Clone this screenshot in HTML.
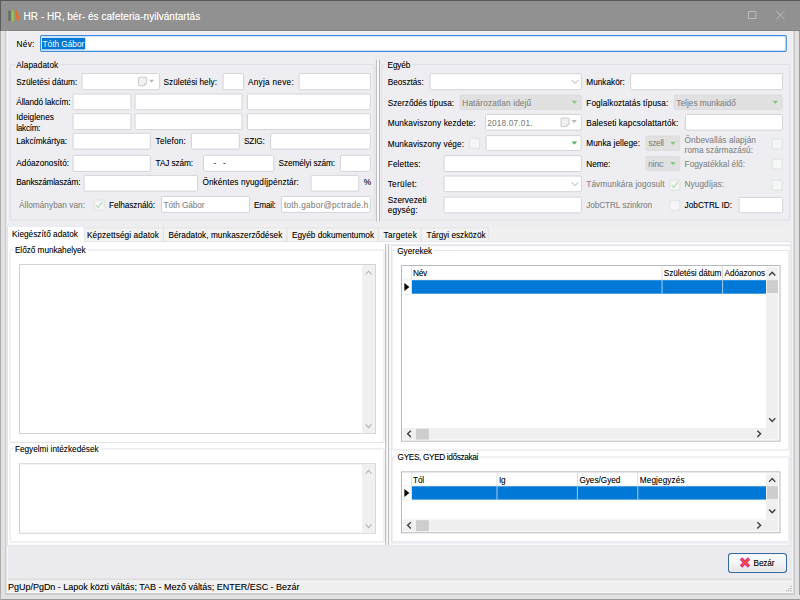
<!DOCTYPE html>
<html lang="hu"><head><meta charset="utf-8"><title>HR - HR, bér- és cafeteria-nyilvántartás</title>
<style>
html,body{margin:0;padding:0;}
body{width:800px;height:600px;overflow:hidden;position:relative;background:#eeeef2;font-family:"Liberation Sans",sans-serif;font-size:8.25px;color:#000;}
#ui{position:absolute;left:0;top:0;}
#labels span{text-shadow:0 0 0.5px rgba(0,0,0,.28);position:absolute;white-space:pre;line-height:12px;height:12px;}

</style></head><body>
<svg id="ui" width="800" height="600" viewBox="0 0 800 600">
<rect x="0.00" y="0.00" width="800.00" height="31.00" rx="0" fill="#919191" />
<rect x="0.00" y="0.00" width="800.00" height="1.00" rx="0" fill="#585858" />
<rect x="0.00" y="30.00" width="800.00" height="1.00" rx="0" fill="#858585" />
<rect x="0.00" y="0.00" width="0.90" height="31.00" rx="0" fill="#555" />
<rect x="0.00" y="31.00" width="5.00" height="569.00" rx="0" fill="#e2e2e2" />
<rect x="0.00" y="31.00" width="0.90" height="569.00" rx="0" fill="#adadad" />
<rect x="5.00" y="31.00" width="1.60" height="564.00" rx="0" fill="#cbcbcb" />
<rect x="6.60" y="31.00" width="1.40" height="562.00" rx="0" fill="#f7f7f9" />
<rect x="792.00" y="31.00" width="1.20" height="562.00" rx="0" fill="#f6f6f8" />
<rect x="793.20" y="31.00" width="1.80" height="564.00" rx="0" fill="#cbcbcb" />
<rect x="795.00" y="31.00" width="5.00" height="569.00" rx="0" fill="#e2e2e2" />
<rect x="799.00" y="31.00" width="1.00" height="569.00" rx="0" fill="#9a9a9a" />
<rect x="6.60" y="592.00" width="786.60" height="1.20" rx="0" fill="#f6f6f8" />
<rect x="5.00" y="593.20" width="790.00" height="1.80" rx="0" fill="#cbcbcb" />
<rect x="0.00" y="595.00" width="800.00" height="5.00" rx="0" fill="#e2e2e2" />
<rect x="0.00" y="599.00" width="800.00" height="1.00" rx="0" fill="#9a9a9a" />
<rect x="0.00" y="31.00" width="0.90" height="569.00" rx="0" fill="#adadad" />
<g transform="translate(7 9)"><rect x="1.2" y="1.5" width="2.6" height="10.5" rx="0.8" fill="#6b6b6b"/><rect x="4.4" y="1.2" width="2.8" height="11" rx="0.9" fill="#8cc63f"/><path d="M7.6 2.2 L10 1.4 L12.6 11 L10.2 11.8 Z" fill="#f26a21"/></g>
<rect x="748.67" y="11.38" width="7.25" height="7.25" rx="0" fill="none" stroke="#c9c9c9" stroke-width="0.75" />
<path transform="translate(0.00 0.00)" d="M776.3 11 L784.5 19.2 M784.5 11 L776.3 19.2" fill="none" stroke="#c9c9c9" stroke-width="0.75" />
<rect x="40.60" y="35.70" width="745.60" height="15.60" rx="1.1" fill="#fff" stroke="#3a8bdc" stroke-width="1.2" />
<rect x="42.00" y="37.80" width="43.20" height="11.60" rx="0" fill="#0078d7" />
<rect x="10.40" y="64.60" width="363.80" height="155.60" rx="1" fill="none" stroke="#dbdbe0" stroke-width="0.8" />
<rect x="14.90" y="62.00" width="45.00" height="6.00" rx="0" fill="#eeeef2" />
<rect x="82.05" y="73.55" width="77.50" height="16.20" rx="1.2" fill="#fff" stroke="#cfcfd4" stroke-width="0.9" />
<path transform="translate(138.60 77.20)" d="M0.8 0 h6.4 a0.8 0.8 0 0 1 .8 .8 v5.6 l-2.2 2.2 h-5 a0.8 0.8 0 0 1 -.8 -.8 v-7 a0.8 0.8 0 0 1 .8 -.8z" fill="#eff1f4" stroke="#c3bfbc" stroke-width="0.8" />
<path transform="translate(138.60 77.20)" d="M8 6.4 l-2.2 0 l0 2.2" fill="none" stroke="#c8c8c8" stroke-width="0.6" />
<path transform="translate(151.50 81.30)" d="M-2.6 -1.5 h5.2 l-2.6 3z" fill="#b9b6b3"  />
<rect x="223.05" y="73.55" width="20.50" height="16.20" rx="1.2" fill="#fff" stroke="#cfcfd4" stroke-width="0.9" />
<rect x="299.05" y="73.55" width="71.30" height="16.20" rx="1.2" fill="#fff" stroke="#cfcfd4" stroke-width="0.9" />
<rect x="73.05" y="94.05" width="57.90" height="15.70" rx="1.2" fill="#fff" stroke="#cfcfd4" stroke-width="0.9" />
<rect x="135.05" y="94.05" width="106.90" height="15.70" rx="1.2" fill="#fff" stroke="#cfcfd4" stroke-width="0.9" />
<rect x="247.45" y="94.05" width="122.90" height="15.70" rx="1.2" fill="#fff" stroke="#cfcfd4" stroke-width="0.9" />
<rect x="73.05" y="113.65" width="57.90" height="15.90" rx="1.2" fill="#fff" stroke="#cfcfd4" stroke-width="0.9" />
<rect x="135.05" y="113.65" width="106.90" height="15.90" rx="1.2" fill="#fff" stroke="#cfcfd4" stroke-width="0.9" />
<rect x="247.45" y="113.65" width="122.90" height="15.90" rx="1.2" fill="#fff" stroke="#cfcfd4" stroke-width="0.9" />
<rect x="73.05" y="133.25" width="77.30" height="15.80" rx="1.2" fill="#fff" stroke="#cfcfd4" stroke-width="0.9" />
<rect x="191.45" y="133.25" width="47.90" height="15.80" rx="1.2" fill="#fff" stroke="#cfcfd4" stroke-width="0.9" />
<rect x="270.65" y="133.25" width="99.70" height="15.80" rx="1.2" fill="#fff" stroke="#cfcfd4" stroke-width="0.9" />
<rect x="73.05" y="155.35" width="77.30" height="16.00" rx="1.2" fill="#fff" stroke="#cfcfd4" stroke-width="0.9" />
<rect x="203.45" y="155.35" width="70.30" height="16.00" rx="1.2" fill="#fff" stroke="#cfcfd4" stroke-width="0.9" />
<rect x="340.45" y="155.35" width="29.90" height="16.00" rx="1.2" fill="#fff" stroke="#cfcfd4" stroke-width="0.9" />
<rect x="84.05" y="175.35" width="113.50" height="15.80" rx="1.2" fill="#fff" stroke="#cfcfd4" stroke-width="0.9" />
<rect x="311.05" y="175.35" width="47.70" height="15.80" rx="1.2" fill="#fff" stroke="#cfcfd4" stroke-width="0.9" />
<rect x="94.15" y="200.15" width="9.90" height="9.90" rx="0.5" fill="#f6f6f8" stroke="#d6e3d6" stroke-width="0.9" />
<path transform="translate(94.00 200.00)" d="M2 5 L4 7.5 L8.3 1.9" fill="none" stroke="#a3d9a5" stroke-width="1.05" />
<rect x="161.45" y="196.45" width="88.10" height="15.90" rx="1.2" fill="#fff" stroke="#cfcfd4" stroke-width="0.9" />
<rect x="281.45" y="196.45" width="88.90" height="15.90" rx="1.2" fill="#fff" stroke="#cfcfd4" stroke-width="0.9" />
<rect x="375.30" y="59.00" width="5.20" height="162.90" rx="0" fill="#fafafc" />
<rect x="375.80" y="59.40" width="1.00" height="162.40" rx="0" fill="#b2b2b4" />
<rect x="379.00" y="59.40" width="1.00" height="162.40" rx="0" fill="#b2b2b4" />
<rect x="381.40" y="64.60" width="408.20" height="155.60" rx="1" fill="none" stroke="#dbdbe0" stroke-width="0.8" />
<rect x="386.20" y="62.00" width="25.60" height="6.00" rx="0" fill="#eeeef2" />
<rect x="430.05" y="73.65" width="151.30" height="16.00" rx="1.2" fill="#fff" stroke="#cfcfd4" stroke-width="0.9" />
<path transform="translate(575.00 81.80)" d="M-3.3 -1.7 L0 1.7 L3.3 -1.7" fill="none" stroke="#9c9c9c" stroke-width="0.8" />
<rect x="630.65" y="73.65" width="151.80" height="16.00" rx="1.2" fill="#fff" stroke="#cfcfd4" stroke-width="0.9" />
<rect x="460.10" y="95.10" width="121.00" height="14.50" rx="0.9" fill="#e1e1e1" stroke="#d9d9d9" stroke-width="0.8" />
<path transform="translate(574.40 102.40)" d="M-2.7 -1.6 h5.4 l-2.7 3.2z" fill="#86c786"  />
<rect x="674.10" y="95.10" width="108.00" height="14.50" rx="0.9" fill="#e1e1e1" stroke="#d9d9d9" stroke-width="0.8" />
<path transform="translate(775.40 102.40)" d="M-2.7 -1.6 h5.4 l-2.7 3.2z" fill="#86c786"  />
<rect x="485.45" y="114.45" width="95.90" height="15.70" rx="1.2" fill="#fff" stroke="#cfcfd4" stroke-width="0.9" />
<path transform="translate(561.00 118.00)" d="M0.8 0 h6.4 a0.8 0.8 0 0 1 .8 .8 v5.6 l-2.2 2.2 h-5 a0.8 0.8 0 0 1 -.8 -.8 v-7 a0.8 0.8 0 0 1 .8 -.8z" fill="#eff1f4" stroke="#c3bfbc" stroke-width="0.8" />
<path transform="translate(561.00 118.00)" d="M8 6.4 l-2.2 0 l0 2.2" fill="none" stroke="#c8c8c8" stroke-width="0.6" />
<path transform="translate(574.20 121.60)" d="M-2.7 -1.5 h5.4 l-2.7 3z" fill="#b9b6b3"  />
<rect x="685.45" y="114.45" width="97.00" height="15.70" rx="1.2" fill="#fff" stroke="#cfcfd4" stroke-width="0.9" />
<rect x="469.75" y="138.15" width="9.90" height="10.10" rx="0.5" fill="#f6f6f8" stroke="#d6e3d6" stroke-width="0.9" />
<rect x="486.05" y="135.65" width="95.10" height="14.80" rx="1.2" fill="#fff" stroke="#cfcfd4" stroke-width="0.9" />
<path transform="translate(574.40 143.20)" d="M-2.7 -1.6 h5.4 l-2.7 3.2z" fill="#55b055"  />
<rect x="646.10" y="136.10" width="33.60" height="14.30" rx="0.9" fill="#e1e1e1" stroke="#d9d9d9" stroke-width="0.8" />
<path transform="translate(673.00 143.40)" d="M-2.7 -1.6 h5.4 l-2.7 3.2z" fill="#86c786"  />
<rect x="772.15" y="139.15" width="9.90" height="9.90" rx="0.5" fill="#f6f6f8" stroke="#d6e3d6" stroke-width="0.9" />
<rect x="444.05" y="155.65" width="137.30" height="15.90" rx="1.2" fill="#fff" stroke="#cfcfd4" stroke-width="0.9" />
<rect x="646.10" y="156.50" width="33.60" height="14.00" rx="0.9" fill="#e1e1e1" stroke="#d9d9d9" stroke-width="0.8" />
<path transform="translate(673.00 163.60)" d="M-2.7 -1.6 h5.4 l-2.7 3.2z" fill="#86c786"  />
<rect x="772.15" y="159.15" width="9.90" height="9.90" rx="0.5" fill="#f6f6f8" stroke="#d6e3d6" stroke-width="0.9" />
<rect x="444.05" y="176.05" width="137.30" height="15.60" rx="1.2" fill="#fff" stroke="#cfcfd4" stroke-width="0.9" />
<path transform="translate(575.00 184.00)" d="M-3.3 -1.7 L0 1.7 L3.3 -1.7" fill="none" stroke="#9c9c9c" stroke-width="0.8" />
<rect x="669.95" y="180.15" width="9.90" height="9.90" rx="0.5" fill="#f6f6f8" stroke="#d6e3d6" stroke-width="0.9" />
<path transform="translate(669.80 180.00)" d="M2 5 L4 7.5 L8.3 1.9" fill="none" stroke="#a3d9a5" stroke-width="1.05" />
<rect x="772.15" y="180.15" width="9.90" height="9.90" rx="0.5" fill="#f6f6f8" stroke="#d6e3d6" stroke-width="0.9" />
<rect x="444.05" y="197.05" width="137.30" height="15.90" rx="1.2" fill="#fff" stroke="#cfcfd4" stroke-width="0.9" />
<rect x="669.95" y="200.35" width="9.90" height="9.90" rx="0.5" fill="#f6f6f8" stroke="#d6e3d6" stroke-width="0.9" />
<rect x="739.05" y="197.45" width="43.60" height="15.30" rx="1.2" fill="#fff" stroke="#cfcfd4" stroke-width="0.9" />
<rect x="7.00" y="225.40" width="784.00" height="16.20" rx="0" fill="#f0f0f0" />
<rect x="83.60" y="227.80" width="80.00" height="14.80" rx="0" fill="#f2f2f2" stroke="#dfdfdf" stroke-width="0.8" />
<rect x="163.60" y="227.80" width="123.40" height="14.80" rx="0" fill="#f2f2f2" stroke="#dfdfdf" stroke-width="0.8" />
<rect x="287.00" y="227.80" width="91.20" height="14.80" rx="0" fill="#f2f2f2" stroke="#dfdfdf" stroke-width="0.8" />
<rect x="378.20" y="227.80" width="43.00" height="14.80" rx="0" fill="#f2f2f2" stroke="#dfdfdf" stroke-width="0.8" />
<rect x="421.20" y="227.80" width="67.00" height="14.80" rx="0" fill="#f2f2f2" stroke="#dfdfdf" stroke-width="0.8" />
<rect x="7.45" y="241.65" width="783.70" height="303.60" rx="0" fill="#fff" stroke="#e1e1e4" stroke-width="0.9" />
<rect x="391.30" y="245.10" width="398.80" height="298.00" rx="0" fill="none" stroke="#e4e4ef" stroke-width="1" />
<rect x="390.80" y="244.60" width="399.80" height="1.60" rx="0" fill="#e5e5f0" />
<rect x="7.40" y="226.20" width="76.80" height="16.40" rx="0" fill="#fff" stroke="#e1e1e4" stroke-width="0.8" />
<rect x="7.90" y="241.00" width="75.90" height="2.20" rx="0" fill="#fff" />
<rect x="10.00" y="250.00" width="374.00" height="192.40" rx="1" fill="none" stroke="#dbdbe0" stroke-width="0.8" />
<rect x="13.50" y="247.00" width="73.80" height="6.00" rx="0" fill="#fff" />
<rect x="19.40" y="264.60" width="356.20" height="169.00" rx="0" fill="#fff" stroke="#c9c9cd" stroke-width="0.8" />
<rect x="362.00" y="265.00" width="13.20" height="168.20" rx="0" fill="#f0f0f0" />
<path transform="translate(368.60 272.80)" d="M-2.9 1.6 L0 -1.6 L2.9 1.6" fill="none" stroke="#b4b4b4" stroke-width="1.1" />
<path transform="translate(368.60 426.00)" d="M-2.9 -1.6 L0 1.6 L2.9 -1.6" fill="none" stroke="#b4b4b4" stroke-width="1.1" />
<rect x="10.00" y="448.80" width="374.00" height="93.20" rx="1" fill="none" stroke="#dbdbe0" stroke-width="0.8" />
<rect x="13.50" y="445.90" width="86.80" height="6.00" rx="0" fill="#fff" />
<rect x="19.40" y="463.80" width="356.20" height="69.40" rx="0" fill="#fff" stroke="#c9c9cd" stroke-width="0.8" />
<rect x="362.00" y="464.20" width="13.20" height="68.60" rx="0" fill="#f0f0f0" />
<path transform="translate(368.60 472.00)" d="M-2.9 1.6 L0 -1.6 L2.9 1.6" fill="none" stroke="#b4b4b4" stroke-width="1.1" />
<path transform="translate(368.60 526.00)" d="M-2.9 -1.6 L0 1.6 L2.9 -1.6" fill="none" stroke="#b4b4b4" stroke-width="1.1" />
<rect x="385.20" y="244.00" width="4.00" height="300.80" rx="0" fill="#f6f6f8" />
<rect x="385.20" y="244.00" width="0.90" height="300.80" rx="0" fill="#b2b2b4" />
<rect x="388.20" y="244.00" width="0.90" height="300.80" rx="0" fill="#b2b2b4" />
<rect x="392.00" y="250.40" width="397.00" height="199.60" rx="1" fill="none" stroke="#dbdbe0" stroke-width="0.8" />
<rect x="395.80" y="247.80" width="38.00" height="6.00" rx="0" fill="#fff" />
<rect x="401.45" y="265.45" width="378.50" height="175.70" rx="0" fill="#fff" stroke="#b0b0b9" stroke-width="0.9" />
<rect x="411.30" y="265.80" width="0.70" height="27.90" rx="0" fill="#d6d6d6" />
<rect x="401.80" y="279.60" width="364.20" height="0.60" rx="0" fill="#e0e0e0" />
<rect x="401.80" y="293.70" width="10.20" height="0.60" rx="0" fill="#e0e0e0" />
<rect x="661.60" y="265.80" width="0.80" height="14.40" rx="0" fill="#d6d6d6" />
<rect x="722.20" y="265.80" width="0.80" height="14.40" rx="0" fill="#d6d6d6" />
<rect x="412.00" y="280.20" width="354.00" height="13.50" rx="0" fill="#0078d7" />
<rect x="661.50" y="280.20" width="1.00" height="13.50" rx="0" fill="#a5cdf0" />
<rect x="722.10" y="280.20" width="1.00" height="13.50" rx="0" fill="#a5cdf0" />
<path transform="translate(404.40 287.05)" d="M0 -4 L5 0 L0 4z" fill="#000"  />
<rect x="766.00" y="267.00" width="12.00" height="161.00" rx="0" fill="#f0f0f0" />
<rect x="767.00" y="280.20" width="11.00" height="12.80" rx="0" fill="#cdcdcd" />
<path transform="translate(772.20 273.60)" d="M-3.1 1.9 L0 -1.4 L3.1 1.9" fill="none" stroke="#3a3a3a" stroke-width="1.35" />
<path transform="translate(772.20 420.00)" d="M-3.1 -1.9 L0 1.4 L3.1 -1.9" fill="none" stroke="#3a3a3a" stroke-width="1.35" />
<rect x="402.60" y="428.00" width="375.40" height="11.60" rx="0" fill="#f0f0f0" />
<rect x="416.00" y="428.80" width="12.80" height="10.80" rx="0" fill="#cdcdcd" />
<path transform="translate(409.00 433.80)" d="M1.9 -3.1 L-1.4 0 L1.9 3.1" fill="none" stroke="#3a3a3a" stroke-width="1.35" />
<path transform="translate(759.20 433.80)" d="M-1.9 -3.1 L1.4 0 L-1.9 3.1" fill="none" stroke="#3a3a3a" stroke-width="1.35" />
<rect x="392.00" y="457.00" width="397.00" height="84.80" rx="1" fill="none" stroke="#dbdbe0" stroke-width="0.8" />
<rect x="396.20" y="454.00" width="83.40" height="6.00" rx="0" fill="#fff" />
<rect x="401.45" y="471.85" width="378.50" height="60.90" rx="0" fill="#fff" stroke="#b0b0b9" stroke-width="0.9" />
<rect x="411.30" y="472.20" width="0.70" height="27.40" rx="0" fill="#d6d6d6" />
<rect x="401.80" y="485.70" width="364.20" height="0.60" rx="0" fill="#e0e0e0" />
<rect x="401.80" y="499.60" width="10.20" height="0.60" rx="0" fill="#e0e0e0" />
<rect x="496.60" y="472.20" width="0.80" height="14.10" rx="0" fill="#d6d6d6" />
<rect x="577.00" y="472.20" width="0.80" height="14.10" rx="0" fill="#d6d6d6" />
<rect x="637.40" y="472.20" width="0.80" height="14.10" rx="0" fill="#d6d6d6" />
<rect x="412.00" y="486.30" width="354.00" height="13.30" rx="0" fill="#0078d7" />
<rect x="496.50" y="486.30" width="1.00" height="13.30" rx="0" fill="#a5cdf0" />
<rect x="576.90" y="486.30" width="1.00" height="13.30" rx="0" fill="#a5cdf0" />
<rect x="637.30" y="486.30" width="1.00" height="13.30" rx="0" fill="#a5cdf0" />
<path transform="translate(404.40 493.05)" d="M0 -4 L5 0 L0 4z" fill="#000"  />
<rect x="766.00" y="473.40" width="12.00" height="46.00" rx="0" fill="#f0f0f0" />
<rect x="767.00" y="486.30" width="11.00" height="12.60" rx="0" fill="#cdcdcd" />
<path transform="translate(772.20 480.00)" d="M-3.1 1.9 L0 -1.4 L3.1 1.9" fill="none" stroke="#3a3a3a" stroke-width="1.35" />
<path transform="translate(772.20 511.40)" d="M-3.1 -1.9 L0 1.4 L3.1 -1.9" fill="none" stroke="#3a3a3a" stroke-width="1.35" />
<rect x="402.60" y="519.40" width="375.40" height="11.80" rx="0" fill="#f0f0f0" />
<rect x="416.00" y="520.20" width="12.80" height="11.00" rx="0" fill="#cdcdcd" />
<path transform="translate(409.00 525.30)" d="M1.9 -3.1 L-1.4 0 L1.9 3.1" fill="none" stroke="#3a3a3a" stroke-width="1.35" />
<path transform="translate(759.20 525.30)" d="M-1.9 -3.1 L1.4 0 L-1.9 3.1" fill="none" stroke="#3a3a3a" stroke-width="1.35" />
<rect x="8.00" y="545.70" width="784.00" height="32.90" rx="0" fill="#ebebef" />
<rect x="8.00" y="578.60" width="784.00" height="1.40" rx="0" fill="#dcdcdc" />
<rect x="8.00" y="580.00" width="784.00" height="12.00" rx="0" fill="#f0f0f0" />
<defs><linearGradient id="bg" x1="0" y1="0" x2="0" y2="1"><stop offset="0" stop-color="#fefefe"/><stop offset="0.5" stop-color="#f4f4f4"/><stop offset="1" stop-color="#e4e4e4"/></linearGradient></defs>
<rect x="728.62" y="553.62" width="57.75" height="18.75" rx="2.6" fill="url(#bg)" stroke="#356a9f" stroke-width="1.25" />
<rect x="729.60" y="554.60" width="55.80" height="16.80" rx="1.6" fill="none" stroke="#ffffff" stroke-width="0.8" />
<path transform="translate(745.00 562.50)" d="M-4 -4 L4 4 M4 -4 L-4 4" fill="none" stroke="#dd22b0" stroke-width="3.3" />
<path transform="translate(745.00 562.50)" d="M-3.5 -3.5 L3.5 3.5 M3.5 -3.5 L-3.5 3.5" fill="none" stroke="#f2541f" stroke-width="1.7" />
<g transform="translate(785.4 585.4)" fill="#adadad"><rect x="5" y="0.4" width="1.2" height="1.2"/><rect x="2.8" y="2.6" width="1.2" height="1.2"/><rect x="5" y="2.6" width="1.2" height="1.2"/><rect x="0.6" y="4.8" width="1.2" height="1.2"/><rect x="2.8" y="4.8" width="1.2" height="1.2"/><rect x="5" y="4.8" width="1.2" height="1.2"/></g>
</svg>
<div id="labels">
<span style="left:23.60px;top:11px;font-size:10px;letter-spacing:0.038px;color:#fff;text-shadow:0 0 0.6px rgba(255,255,255,.55);">HR - HR, bér- és cafeteria-nyilvántartás</span>
<span style="left:16.60px;top:39px;letter-spacing:0.258px;">Név:</span>
<span style="left:42.60px;top:39px;letter-spacing:-0.013px;color:#fff;text-shadow:none;">Tóth Gábor</span>
<span style="left:16.30px;top:60px;letter-spacing:0.070px;">Alapadatok</span>
<span style="left:16.30px;top:77px;">Születési dátum:</span>
<span style="left:163.60px;top:77px;letter-spacing:0.013px;">Születési hely:</span>
<span style="left:248.00px;top:77px;letter-spacing:0.261px;">Anyja neve:</span>
<span style="left:16.30px;top:97px;letter-spacing:-0.130px;">Állandó lakcím:</span>
<span style="left:16.30px;top:112px;">Ideiglenes</span>
<span style="left:16.30px;top:123px;letter-spacing:-0.306px;">lakcím:</span>
<span style="left:16.30px;top:136px;letter-spacing:-0.051px;">Lakcímkártya:</span>
<span style="left:155.60px;top:136px;letter-spacing:0.187px;">Telefon:</span>
<span style="left:244.00px;top:136px;letter-spacing:-0.189px;">SZIG:</span>
<span style="left:16.30px;top:158px;">Adóazonosító:</span>
<span style="left:155.60px;top:158px;letter-spacing:-0.107px;">TAJ szám:</span>
<span style="left:213.40px;top:158px;color:#333;">-   -</span>
<span style="left:278.60px;top:158px;letter-spacing:-0.098px;">Személyi szám:</span>
<span style="left:16.30px;top:177px;letter-spacing:-0.197px;">Bankszámlaszám:</span>
<span style="left:202.40px;top:177px;letter-spacing:0.107px;">Önkéntes nyugdíjpénztár:</span>
<span style="left:363.80px;top:177px;letter-spacing:0.656px;">%</span>
<span style="left:19.00px;top:200px;letter-spacing:0.025px;color:#8e8e8e;">Állományban van:</span>
<span style="left:109.00px;top:200px;letter-spacing:-0.065px;">Felhasználó:</span>
<span style="left:163.60px;top:200px;letter-spacing:-0.093px;color:#8e8e8e;">Tóth Gábor</span>
<span style="left:254.00px;top:200px;letter-spacing:-0.220px;">Email:</span>
<span style="left:284.00px;top:200px;letter-spacing:0.228px;color:#8e8e8e;">toth.gabor@pctrade.h</span>
<span style="left:387.60px;top:60px;letter-spacing:-0.161px;">Egyéb</span>
<span style="left:387.70px;top:77px;letter-spacing:-0.026px;">Beosztás:</span>
<span style="left:586.30px;top:77px;letter-spacing:0.009px;">Munkakör:</span>
<span style="left:387.70px;top:98px;letter-spacing:0.027px;">Szerződés típusa:</span>
<span style="left:462.30px;top:98px;letter-spacing:0.139px;color:#8e8e8e;">Határozatlan idejű</span>
<span style="left:586.30px;top:98px;letter-spacing:0.079px;">Foglalkoztatás típusa:</span>
<span style="left:676.30px;top:98px;letter-spacing:0.023px;color:#8e8e8e;">Teljes munkaidő</span>
<span style="left:387.70px;top:118px;letter-spacing:0.106px;">Munkaviszony kezdete:</span>
<span style="left:487.30px;top:118px;letter-spacing:0.173px;color:#8e8e8e;">2018.07.01.</span>
<span style="left:586.30px;top:118px;letter-spacing:0.103px;">Baleseti kapcsolattartók:</span>
<span style="left:387.70px;top:139px;letter-spacing:0.092px;">Munkaviszony vége:</span>
<span style="left:586.30px;top:138px;letter-spacing:0.035px;">Munka jellege:</span>
<span style="left:648.30px;top:138px;letter-spacing:-0.223px;color:#8e8e8e;">szell</span>
<span style="left:684.60px;top:135px;letter-spacing:0.067px;color:#8e8e8e;">Önbevallás alapján</span>
<span style="left:684.60px;top:145px;letter-spacing:0.034px;color:#8e8e8e;">roma származású:</span>
<span style="left:387.70px;top:159px;letter-spacing:0.151px;">Felettes:</span>
<span style="left:586.30px;top:159px;letter-spacing:-0.062px;">Neme:</span>
<span style="left:648.30px;top:159px;letter-spacing:-0.127px;color:#8e8e8e;width:15.9px;overflow:hidden;">ninc:</span>
<span style="left:684.60px;top:159px;letter-spacing:0.020px;color:#8e8e8e;">Fogyatékkal élő:</span>
<span style="left:387.70px;top:179px;letter-spacing:0.292px;">Terület:</span>
<span style="left:586.30px;top:179px;letter-spacing:0.090px;color:#8e8e8e;">Távmunkára jogosult</span>
<span style="left:684.60px;top:179px;letter-spacing:0.052px;color:#8e8e8e;">Nyugdíjas:</span>
<span style="left:387.70px;top:195px;letter-spacing:0.048px;">Szervezeti</span>
<span style="left:387.70px;top:205px;letter-spacing:0.156px;">egység:</span>
<span style="left:586.30px;top:200px;letter-spacing:-0.116px;color:#8e8e8e;">JobCTRL szinkron</span>
<span style="left:684.60px;top:200px;">JobCTRL ID:</span>
<span style="left:87.00px;top:230px;letter-spacing:0.101px;">Képzettségi adatok</span>
<span style="left:168.40px;top:230px;letter-spacing:0.027px;">Béradatok, munkaszerződések</span>
<span style="left:292.00px;top:230px;letter-spacing:-0.005px;">Egyéb dokumentumok</span>
<span style="left:383.60px;top:230px;letter-spacing:0.218px;">Targetek</span>
<span style="left:426.40px;top:230px;letter-spacing:-0.027px;">Tárgyi eszközök</span>
<span style="left:12.00px;top:229px;letter-spacing:0.024px;">Kiegészítő adatok</span>
<span style="left:14.90px;top:245px;letter-spacing:-0.044px;">Előző munkahelyek</span>
<span style="left:14.90px;top:444px;letter-spacing:-0.006px;">Fegyelmi intézkedések</span>
<span style="left:397.20px;top:246px;letter-spacing:-0.039px;">Gyerekek</span>
<span style="left:413.00px;top:268px;letter-spacing:-0.224px;">Név</span>
<span style="left:663.80px;top:268px;letter-spacing:-0.080px;">Születési dátum</span>
<span style="left:724.60px;top:268px;letter-spacing:-0.089px;">Adóazonos</span>
<span style="left:397.60px;top:452px;letter-spacing:-0.359px;">GYES, GYED időszakai</span>
<span style="left:413.00px;top:475px;letter-spacing:-0.156px;">Tól</span>
<span style="left:499.00px;top:475px;letter-spacing:-0.195px;">Ig</span>
<span style="left:579.40px;top:475px;letter-spacing:-0.031px;">Gyes/Gyed</span>
<span style="left:639.80px;top:475px;letter-spacing:0.077px;">Megjegyzés</span>
<span style="left:753.60px;top:558px;letter-spacing:-0.192px;">Bezár</span>
<span style="left:8.00px;top:581px;font-size:9px;letter-spacing:-0.019px;">PgUp/PgDn - Lapok közti váltás; TAB - Mező váltás; ENTER/ESC - Bezár</span>
</div>
</body></html>
